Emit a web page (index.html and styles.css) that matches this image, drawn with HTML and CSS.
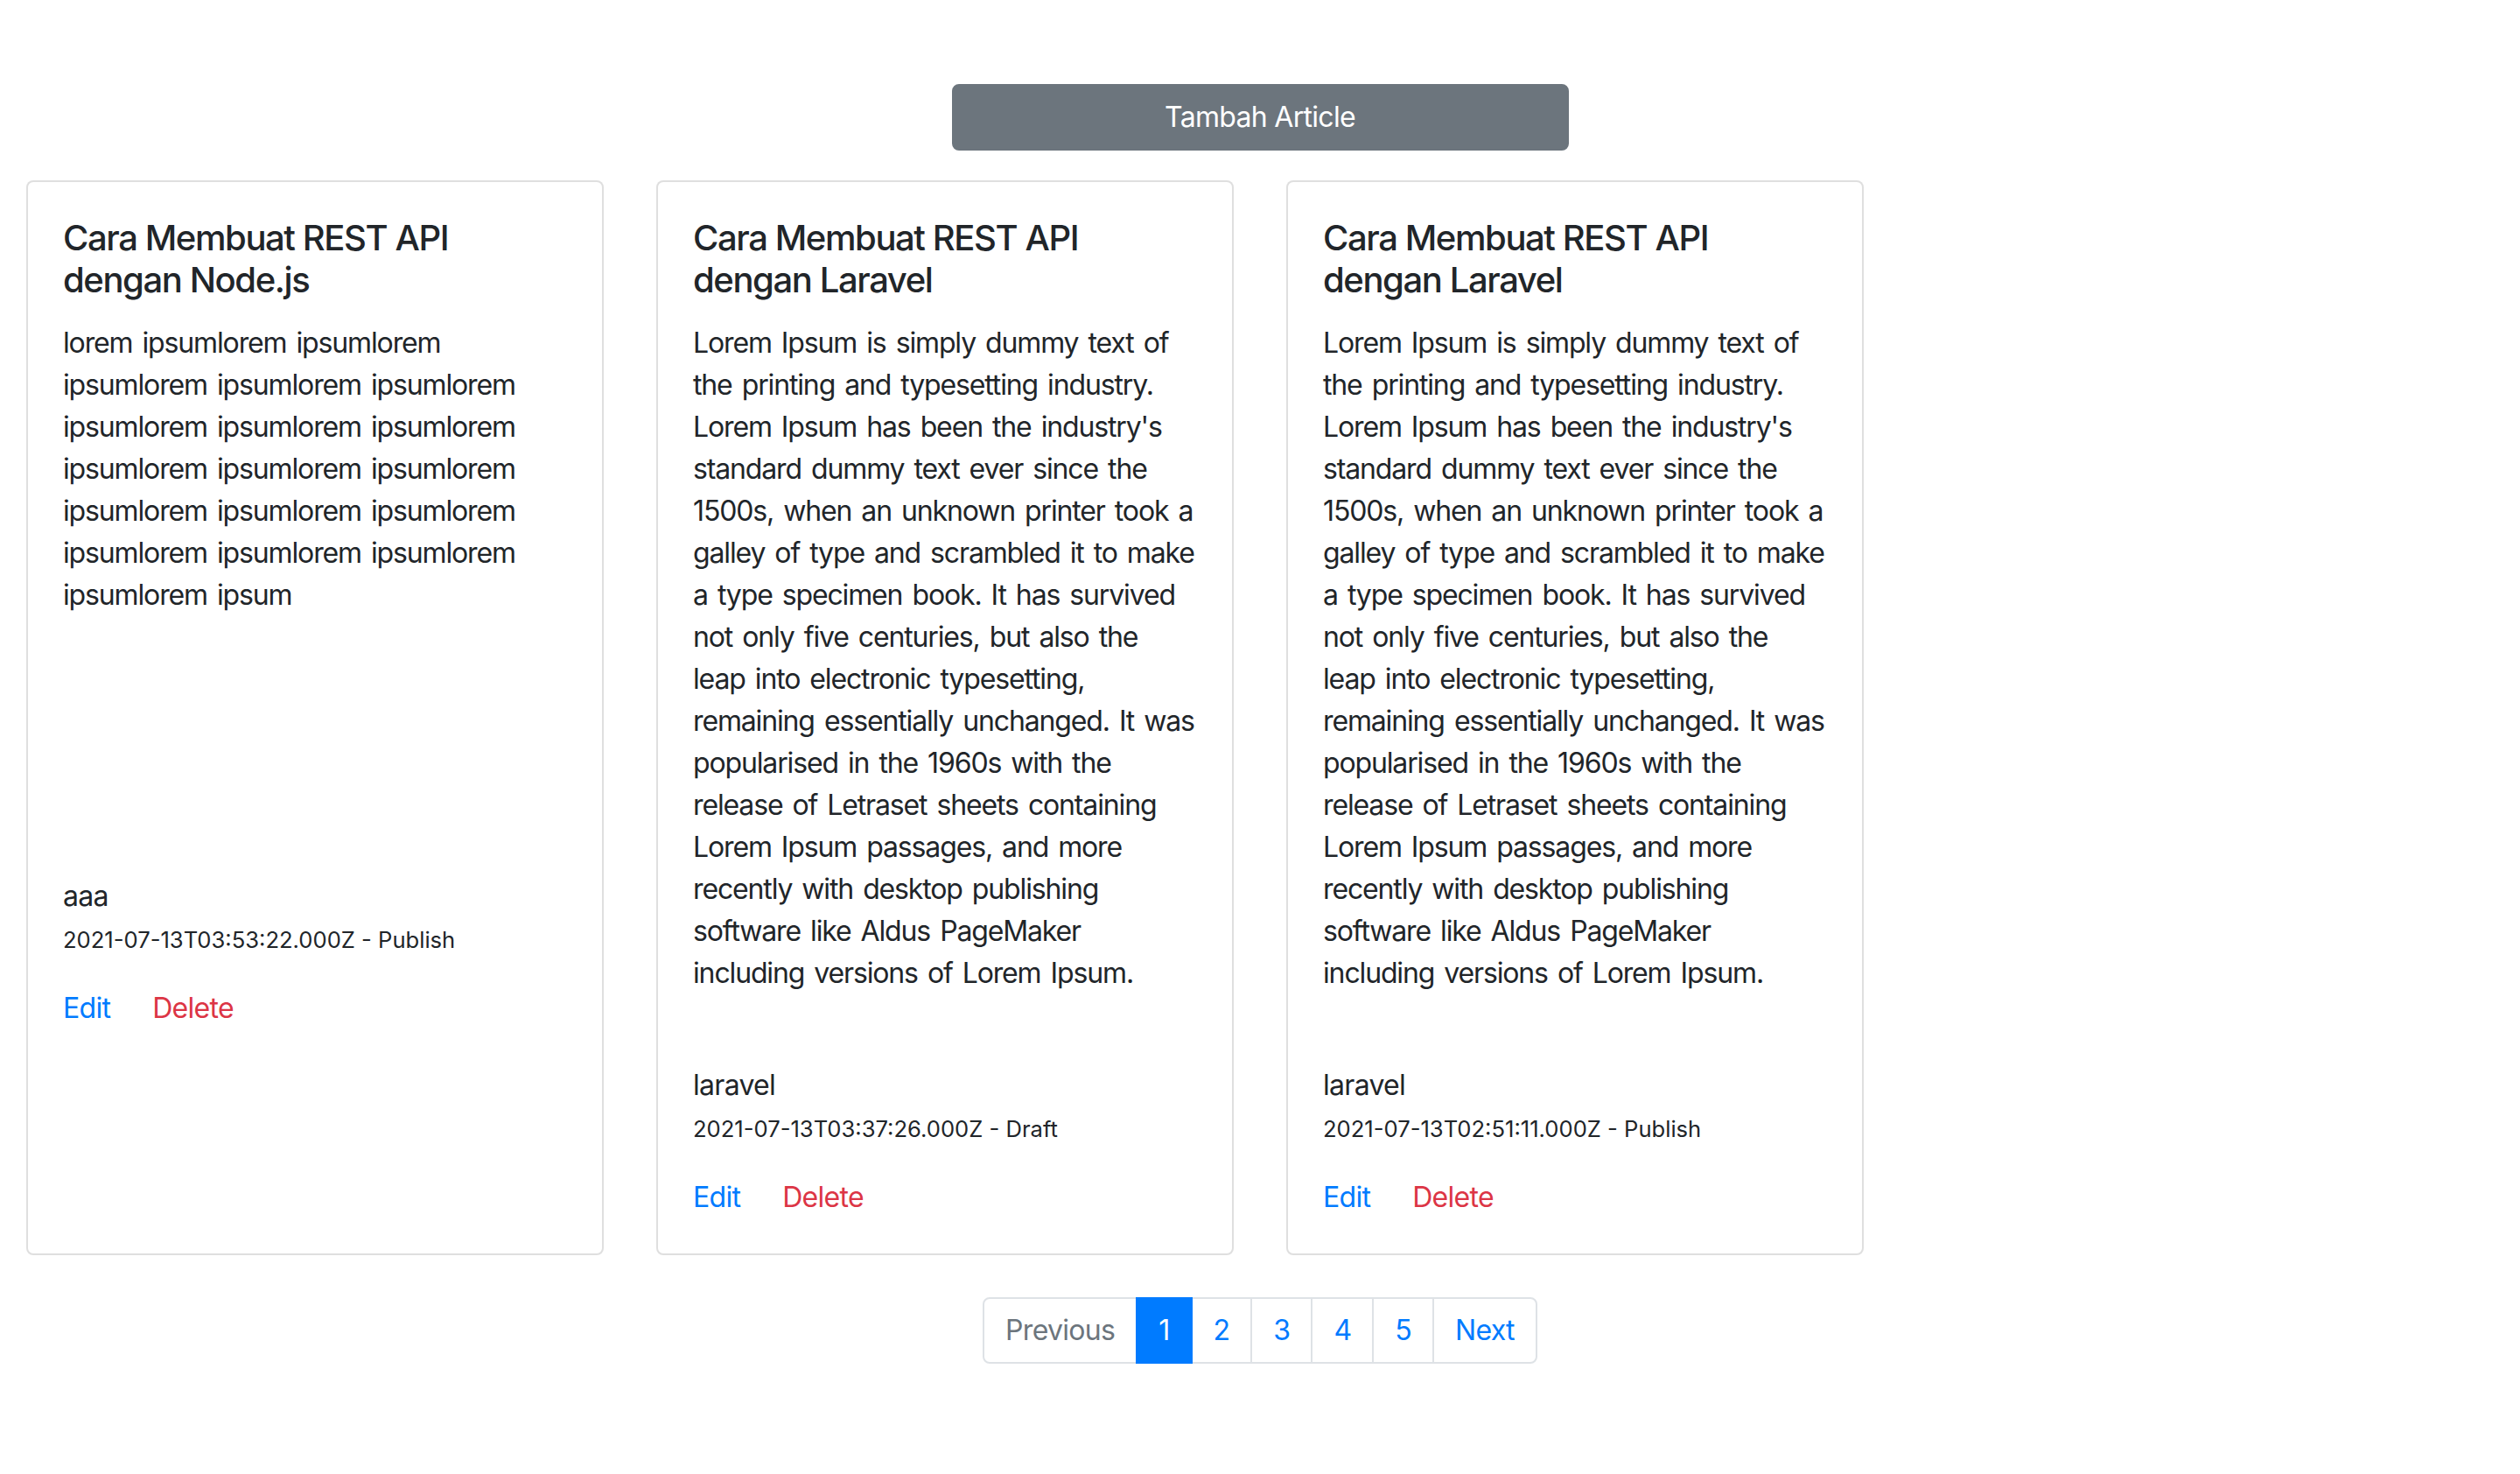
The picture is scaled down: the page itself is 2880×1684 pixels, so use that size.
FILE: index.html
```html
<!DOCTYPE html>
<html lang="id">
<head>
<meta charset="utf-8">
<title>Articles</title>
<link rel="stylesheet" href="styles.css">
</head>
<body>
<div class="container">
  <div class="top">
    <button class="btn-add" type="button">Tambah Article</button>
  </div>
  <div class="row">
    <div class="col">
      <div class="card">
        <div class="card-body">
          <h5 class="card-title">Cara Membuat REST API dengan Node.js</h5>
          <p class="card-text card-text-min">lorem ipsumlorem ipsumlorem ipsumlorem ipsumlorem ipsumlorem ipsumlorem ipsumlorem ipsumlorem ipsumlorem ipsumlorem ipsumlorem ipsumlorem ipsumlorem ipsumlorem ipsumlorem ipsumlorem ipsumlorem ipsumlorem ipsum</p>
          <div class="tag">aaa</div>
          <p class="meta"><small>2021-07-13T03:53:22.000Z - Publish</small></p>
          <div class="actions"><a class="link-edit" href="#">Edit</a><a class="link-delete" href="#">Delete</a></div>
        </div>
      </div>
    </div>
    <div class="col">
      <div class="card">
        <div class="card-body">
          <h5 class="card-title">Cara Membuat REST API dengan Laravel</h5>
          <p class="card-text">Lorem Ipsum is simply dummy text of the printing and typesetting industry. Lorem Ipsum has been the industry's standard dummy text ever since the 1500s, when an unknown printer took a galley of type and scrambled it to make a type specimen book. It has survived not only five centuries, but also the leap into electronic typesetting, remaining essentially unchanged. It was popularised in the 1960s with the release of Letraset sheets containing Lorem Ipsum passages, and more recently with desktop publishing software like Aldus PageMaker including versions of Lorem Ipsum.</p>
          <div class="tag">laravel</div>
          <p class="meta"><small>2021-07-13T03:37:26.000Z - Draft</small></p>
          <div class="actions"><a class="link-edit" href="#">Edit</a><a class="link-delete" href="#">Delete</a></div>
        </div>
      </div>
    </div>
    <div class="col">
      <div class="card">
        <div class="card-body">
          <h5 class="card-title">Cara Membuat REST API dengan Laravel</h5>
          <p class="card-text">Lorem Ipsum is simply dummy text of the printing and typesetting industry. Lorem Ipsum has been the industry's standard dummy text ever since the 1500s, when an unknown printer took a galley of type and scrambled it to make a type specimen book. It has survived not only five centuries, but also the leap into electronic typesetting, remaining essentially unchanged. It was popularised in the 1960s with the release of Letraset sheets containing Lorem Ipsum passages, and more recently with desktop publishing software like Aldus PageMaker including versions of Lorem Ipsum.</p>
          <div class="tag">laravel</div>
          <p class="meta"><small>2021-07-13T02:51:11.000Z - Publish</small></p>
          <div class="actions"><a class="link-edit" href="#">Edit</a><a class="link-delete" href="#">Delete</a></div>
        </div>
      </div>
    </div>
  </div>
  <nav class="pager">
    <ul class="pagination">
      <li class="page-item disabled"><span class="page-link">Previous</span></li>
      <li class="page-item active"><span class="page-link">1</span></li>
      <li class="page-item"><a class="page-link" href="#">2</a></li>
      <li class="page-item"><a class="page-link" href="#">3</a></li>
      <li class="page-item"><a class="page-link" href="#">4</a></li>
      <li class="page-item"><a class="page-link" href="#">5</a></li>
      <li class="page-item"><a class="page-link" href="#">Next</a></li>
    </ul>
  </nav>
</div>
</body>
</html>
```
FILE: styles.css
```css
html { zoom: 2; }
* { box-sizing: border-box; }
body {
  margin: 0;
  font-family: Inter, "Noto Sans", sans-serif;
  font-size: 16px;
  line-height: 1.5;
  letter-spacing: -0.022em;
  color: #212529;
  background: #fff;
}
.container { padding: 0 15px; }
.top {
  display: flex;
  justify-content: center;
  padding-top: 48px;
  margin-bottom: 17px;
}
.btn-add {
  width: 25%;
  height: 38px;
  padding: 6px 12px;
  font: inherit;
  letter-spacing: inherit;
  color: #fff;
  background: #6c757d;
  border: 1px solid #6c757d;
  border-radius: 4px;
}
.row {
  display: flex;
  margin: 0 -15px;
}
.col {
  flex: 0 0 25%;
  max-width: 25%;
  padding: 0 15px;
}
.card {
  height: 100%;
  border: 1px solid rgba(0,0,0,.125);
  border-radius: 4px;
  background: #fff;
}
.card-body { padding: 20px; }
.card-title {
  margin: 0 0 12px;
  font-size: 20px;
  line-height: 1.2;
  font-weight: 500;
  letter-spacing: -0.035em;
}
.card-text {
  margin: 0 0 16px;
  letter-spacing: -0.57px;
  word-spacing: 1.6px;
}
.card-text-min { min-height: 276px; }
.tag { padding-top: 24px; }
.meta { margin: 0 0 16px; }
.meta small { font-size: 80%; letter-spacing: 0; }
.actions a { text-decoration: none; }
.link-edit { color: #007bff; margin-right: 24px; }
.link-delete { color: #dc3545; }
.pager {
  display: flex;
  justify-content: center;
  margin-top: 24px;
}
.pagination {
  display: flex;
  list-style: none;
  margin: 0;
  padding: 0;
}
.page-link {
  display: block;
  padding: 8px 12px;
  line-height: 20px;
  margin-left: -1px;
  color: #007bff;
  background: #fff;
  border: 1px solid #dee2e6;
  text-decoration: none;
}
.page-item:first-child .page-link {
  margin-left: 0;
  border-radius: 4px 0 0 4px;
}
.page-item:last-child .page-link { border-radius: 0 4px 4px 0; }
.page-item.disabled .page-link { color: #6c757d; }
.page-item.active .page-link {
  color: #fff;
  background: #007bff;
  border-color: #007bff;
  position: relative;
}
```
